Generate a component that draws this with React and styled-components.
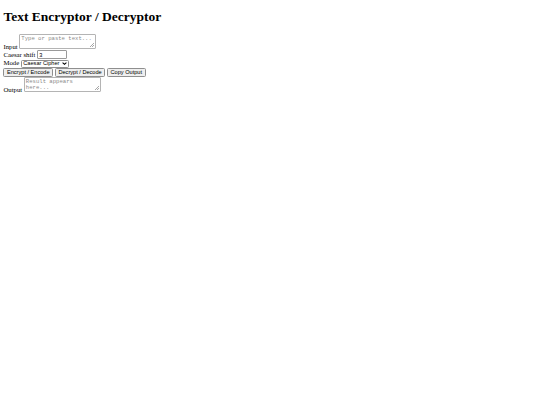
import React, { useState } from "react";
import styled, { createGlobalStyle } from "styled-components";

const Global = createGlobalStyle`
  body {
    margin: 3.4px;
    font-family: "Liberation Serif", "Times New Roman", serif;
    font-size: 6.75px;
    color: #000;
    background: #fff;
  }
`;

const Title = styled.h1`
  font-family: "Liberation Serif", "Times New Roman", serif;
  font-size: 13.5px;
  font-weight: bold;
  margin: 6px 0 9.05px;
`;

const Row = styled.div``;

const Label = styled.label`
  margin-right: 1.7px;
`;

const TextBox = styled.textarea`
  box-sizing: border-box;
  width: 77px;
  height: 15px;
  margin: 0;
  padding: 0.8px 1px;
  border: 1px solid #b4b4b4;
  border-radius: 1px;
  font-family: "Liberation Mono", "Courier New", monospace;
  font-size: 5.6px;
  line-height: 1.15;
  color: #000;
  background: #fff;
  &::placeholder {
    color: #8a8a8a;
  }
  /* small diagonal grip in the corner */
  &::-webkit-resizer {
    background-color: transparent;
    background-image: linear-gradient(
      135deg,
      transparent 45%,
      #a8a8a8 45%,
      #a8a8a8 58%,
      transparent 58%,
      transparent 72%,
      #a8a8a8 72%,
      #a8a8a8 85%,
      transparent 85%
    );
    background-repeat: no-repeat;
    background-position: right 1px bottom 1px;
    background-size: 4px 4px;
  }
`;

const NumberBox = styled.input`
  box-sizing: border-box;
  width: 30px;
  height: 8.6px;
  margin: 0;
  padding: 0 1px;
  border: 1px solid #9a9a9a;
  border-radius: 1px;
  font-family: "Liberation Sans", Arial, sans-serif;
  font-size: 5.6px;
  vertical-align: baseline;
  &::-webkit-inner-spin-button,
  &::-webkit-outer-spin-button {
    -webkit-appearance: none;
    margin: 0;
  }
  -moz-appearance: textfield;
`;

const Select = styled.select`
  appearance: none;
  -webkit-appearance: none;
  box-sizing: border-box;
  height: 7.8px;
  margin: 0;
  padding: 0 8px 0 1.5px;
  border: 1px solid #8f8f8f;
  border-radius: 1.5px;
  font-family: "Liberation Sans", Arial, sans-serif;
  font-size: 5.6px;
  line-height: 5.6px;
  color: #000;
  background-color: #fff;
  background-image: url("data:image/svg+xml;utf8,<svg xmlns='http://www.w3.org/2000/svg' width='6' height='4' viewBox='0 0 6 4'><path d='M0.7 0.8 L3 3.1 L5.3 0.8' fill='none' stroke='black' stroke-width='1.2'/></svg>");
  background-repeat: no-repeat;
  background-position: right 1.5px center;
  background-size: 4.5px 3px;
`;

const Actions = styled.div`
  display: flex;
  gap: 1.7px;
  padding-top: 0.3px;
`;

const Button = styled.button`
  box-sizing: border-box;
  height: 9px;
  margin: 0;
  padding: 0 2.6px;
  border: 1px solid #8f8f8f;
  border-radius: 1.5px;
  background: #efefef;
  font-family: "Liberation Sans", Arial, sans-serif;
  font-size: 5.6px;
  line-height: 1;
  color: #000;
  cursor: pointer;
`;

function caesar(text, shift) {
  return text.replace(/[a-z]/gi, (ch) => {
    const base = ch <= "Z" ? 65 : 97;
    return String.fromCharCode(((ch.charCodeAt(0) - base + shift) % 26 + 26) % 26 + base);
  });
}

export default function App() {
  const [input, setInput] = useState("");
  const [shift, setShift] = useState(3);
  const [output, setOutput] = useState("");
  return (
    <>
      <Global />
      <Title>Text Encryptor / Decryptor</Title>
      <Row>
        <Label htmlFor="in">Input</Label>
        <TextBox
          id="in"
          placeholder="Type or paste text..."
          value={input}
          onChange={(e) => setInput(e.target.value)}
        />
      </Row>
      <Row>
        <Label htmlFor="shift">Caesar shift</Label>
        <NumberBox
          id="shift"
          type="number"
          value={shift}
          onChange={(e) => setShift(Number(e.target.value))}
        />
      </Row>
      <Row>
        <Label htmlFor="mode">Mode</Label>
        <Select id="mode">
          <option>Caesar Cipher</option>
        </Select>
      </Row>
      <Actions>
        <Button onClick={() => setOutput(caesar(input, shift))}>Encrypt / Encode</Button>
        <Button onClick={() => setOutput(caesar(input, -shift))}>Decrypt / Decode</Button>
        <Button onClick={() => navigator.clipboard && navigator.clipboard.writeText(output)}>
          Copy Output
        </Button>
      </Actions>
      <Row>
        <Label htmlFor="out">Output</Label>
        <TextBox id="out" placeholder="Result appears here..." value={output} readOnly />
      </Row>
    </>
  );
}
